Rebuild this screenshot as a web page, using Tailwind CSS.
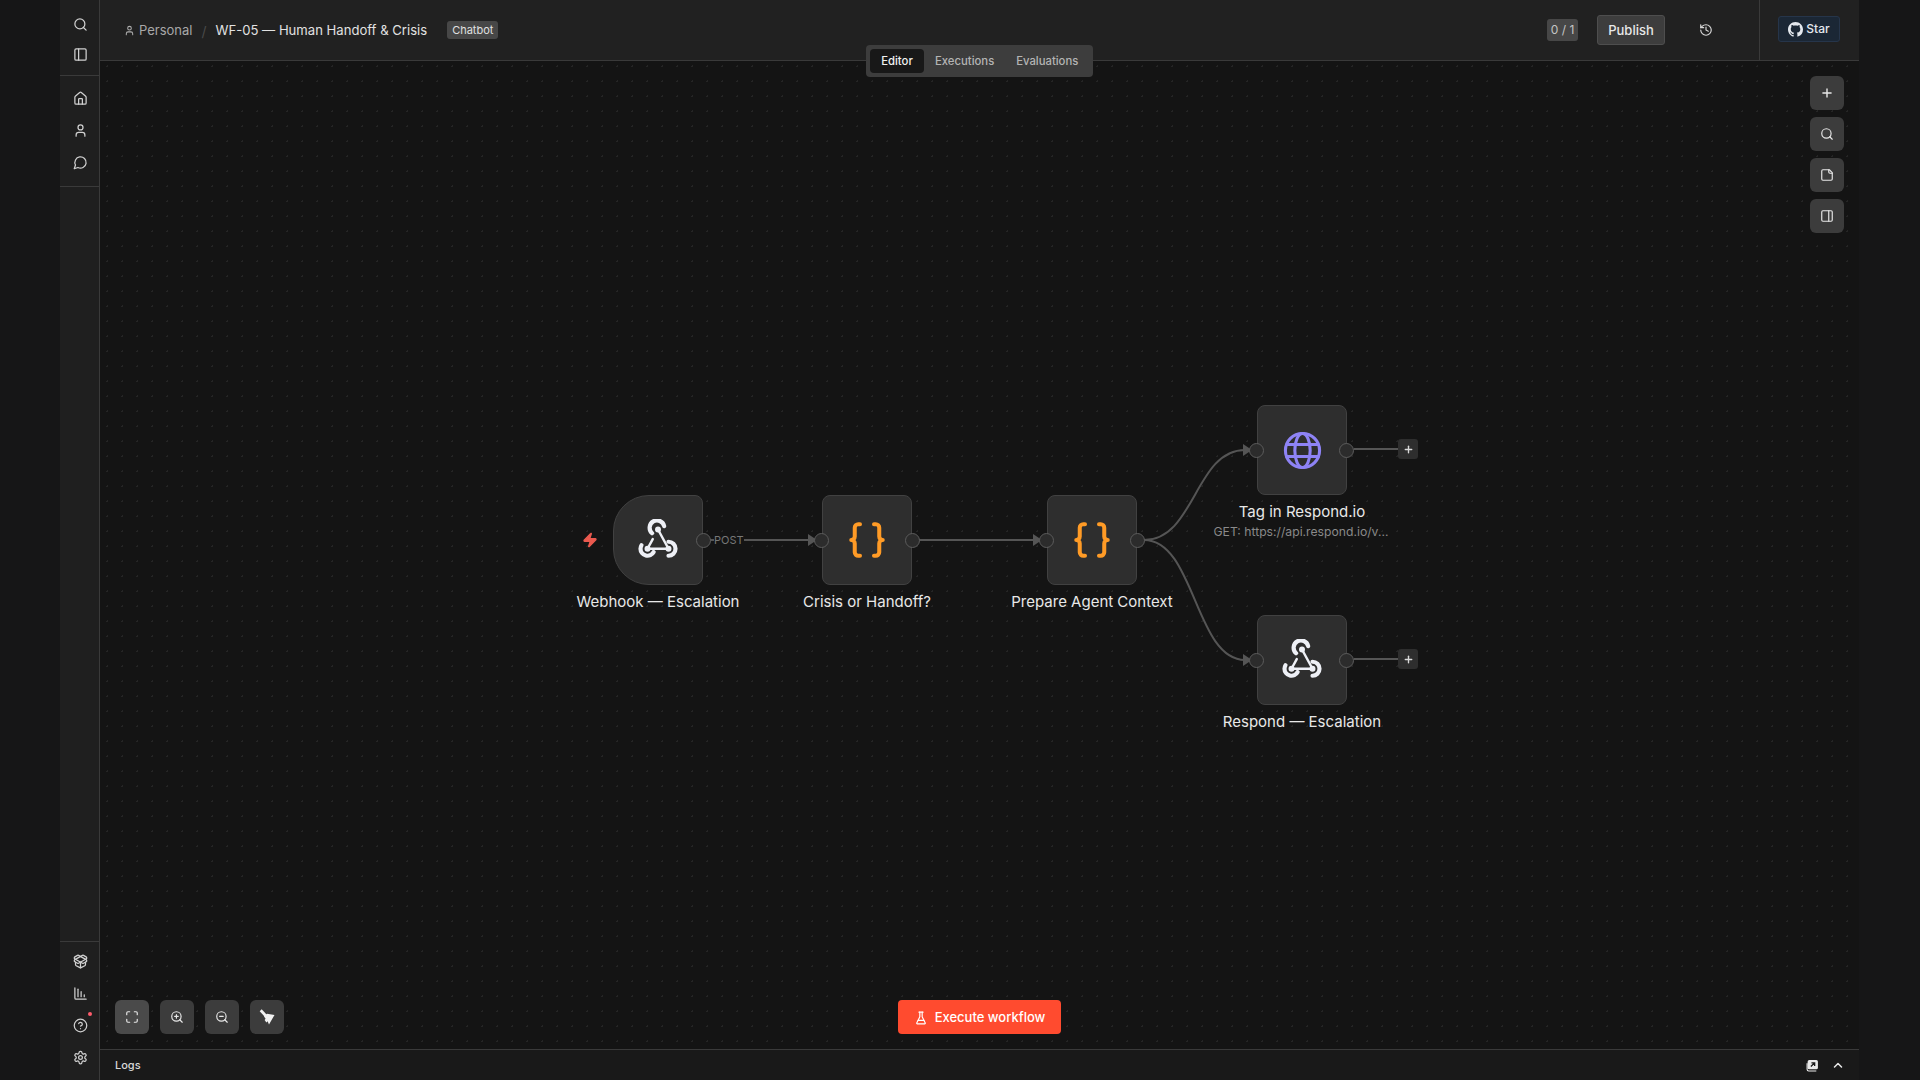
<!DOCTYPE html>
<html lang="en">
  <head>
    <meta charset="UTF-8" />
    <title>WF-05 — Human Handoff & Crisis</title>
    <script src="https://cdn.jsdelivr.net/npm/@tailwindcss/browser@4"></script>
  </head>
  <body class="bg-[#161617] font-[Inter,sans-serif] overflow-hidden">
    <div class="flex h-screen w-[1799px] ml-[60px]">
      <!-- sidebar -->
      <aside class="w-10 shrink-0 flex flex-col bg-[#1f1f1f] border-r border-[#3a3a3a] text-[#d0d0d0] pl-px">
        <div class="h-[76px] pt-[9px] border-b border-[#3a3a3a] -ml-px">
          <div class="h-[30px] pl-px flex items-center justify-center">
            <svg class="w-[15px] h-[15px]" viewBox="0 0 24 24" fill="none" stroke="currentColor" stroke-width="2" stroke-linecap="round" stroke-linejoin="round"><circle cx="11" cy="11" r="8"/><path d="m21 21-4.3-4.3"/></svg>
          </div>
          <div class="h-[30px] pl-px flex items-center justify-center">
            <svg class="w-[15px] h-[15px]" viewBox="0 0 24 24" fill="none" stroke="currentColor" stroke-width="2" stroke-linecap="round" stroke-linejoin="round"><rect x="3" y="3" width="18" height="18" rx="2"/><path d="M9 3v18"/></svg>
          </div>
        </div>
        <div class="h-[111px] pt-[6px] border-b border-[#3a3a3a] -ml-px">
          <div class="h-8 pl-px flex items-center justify-center">
            <svg class="w-[15px] h-[15px]" viewBox="0 0 24 24" fill="none" stroke="currentColor" stroke-width="2" stroke-linecap="round" stroke-linejoin="round"><path d="M15 21v-8a1 1 0 0 0-1-1h-4a1 1 0 0 0-1 1v8"/><path d="M3 10a2 2 0 0 1 .709-1.528l7-5.999a2 2 0 0 1 2.582 0l7 5.999A2 2 0 0 1 21 10v9a2 2 0 0 1-2 2H5a2 2 0 0 1-2-2z"/></svg>
          </div>
          <div class="h-8 pl-px flex items-center justify-center">
            <svg class="w-[15px] h-[15px]" viewBox="0 0 24 24" fill="none" stroke="currentColor" stroke-width="2" stroke-linecap="round" stroke-linejoin="round"><circle cx="12" cy="7" r="4"/><path d="M5 21v-2a4 4 0 0 1 4-4h6a4 4 0 0 1 4 4v2"/></svg>
          </div>
          <div class="h-8 pl-px flex items-center justify-center">
            <svg class="w-[15px] h-[15px]" viewBox="0 0 24 24" fill="none" stroke="currentColor" stroke-width="2" stroke-linecap="round" stroke-linejoin="round"><path d="M7.9 20A9 9 0 1 0 4 16.1L2 22Z"/></svg>
          </div>
        </div>
        <div class="mt-auto pt-[3px] h-[139px] border-t border-[#3a3a3a] -ml-px">
          <div class="h-8 pl-px flex items-center justify-center">
            <svg class="w-[15px] h-[15px]" viewBox="0 0 24 24" fill="none" stroke="currentColor" stroke-width="2" stroke-linecap="round" stroke-linejoin="round"><path d="M12 22v-9"/><path d="M15.17 2.21a1.67 1.67 0 0 1 1.63 0L21 4.57a1.93 1.93 0 0 1 0 3.36L8.82 14.79a1.655 1.655 0 0 1-1.64 0L3 12.43a1.93 1.93 0 0 1 0-3.36z"/><path d="M20 13v3.87a2.06 2.06 0 0 1-1.11 1.83l-6 3.08a1.93 1.93 0 0 1-1.78 0l-6-3.08A2.06 2.06 0 0 1 4 16.87V13"/><path d="M21 12.43a1.93 1.93 0 0 0 0-3.36L8.83 2.2a1.64 1.64 0 0 0-1.63 0L3 4.57a1.93 1.93 0 0 0 0 3.36l12.18 6.86a1.636 1.636 0 0 0 1.63 0z"/></svg>
          </div>
          <div class="h-8 pl-px flex items-center justify-center">
            <svg class="w-[15px] h-[15px]" viewBox="0 0 24 24" fill="none" stroke="currentColor" stroke-width="2" stroke-linecap="round" stroke-linejoin="round"><path d="M3 3v16a2 2 0 0 0 2 2h16"/><path d="M8 17V5"/><path d="M13 17V9"/><path d="M18 17v-3"/></svg>
          </div>
          <div class="relative h-8 pl-px flex items-center justify-center">
            <svg class="w-[15px] h-[15px]" viewBox="0 0 24 24" fill="none" stroke="currentColor" stroke-width="2" stroke-linecap="round" stroke-linejoin="round"><circle cx="12" cy="12" r="10"/><path d="M9.09 9a3 3 0 0 1 5.83 1c0 2-3 3-3 3"/><path d="M12 17h.01"/></svg>
            <span class="absolute left-[28px] top-[3px] w-1 h-1 rounded-full bg-[#ff5c6c]"></span>
          </div>
          <div class="h-8 pl-px flex items-center justify-center">
            <svg class="w-[15px] h-[15px]" viewBox="0 0 24 24" fill="none" stroke="currentColor" stroke-width="2" stroke-linecap="round" stroke-linejoin="round"><path d="M12.22 2h-.44a2 2 0 0 0-2 2v.18a2 2 0 0 1-1 1.73l-.43.25a2 2 0 0 1-2 0l-.15-.08a2 2 0 0 0-2.73.73l-.22.38a2 2 0 0 0 .73 2.73l.15.1a2 2 0 0 1 1 1.72v.51a2 2 0 0 1-1 1.74l-.15.09a2 2 0 0 0-.73 2.73l.22.38a2 2 0 0 0 2.73.73l.15-.08a2 2 0 0 1 2 0l.43.25a2 2 0 0 1 1 1.73V20a2 2 0 0 0 2 2h.44a2 2 0 0 0 2-2v-.18a2 2 0 0 1 1-1.73l.43-.25a2 2 0 0 1 2 0l.15.08a2 2 0 0 0 2.73-.73l.22-.39a2 2 0 0 0-.73-2.73l-.15-.08a2 2 0 0 1-1-1.74v-.5a2 2 0 0 1 1-1.74l.15-.09a2 2 0 0 0 .73-2.73l-.22-.38a2 2 0 0 0-2.73-.73l-.15.08a2 2 0 0 1-2 0l-.43-.25a2 2 0 0 1-1-1.73V4a2 2 0 0 0-2-2z"/><circle cx="12" cy="12" r="3"/></svg>
          </div>
        </div>
      </aside>

      <main class="flex-1 flex flex-col min-w-0">
        <!-- header -->
        <header class="h-[61px] shrink-0 flex items-center bg-[#212121] border-b border-[#3a3a3a] pl-[25px]">
          <svg class="w-[11px] h-[11px] text-[#b0b0b0] mr-[3px] -translate-x-px" viewBox="0 0 24 24" fill="none" stroke="currentColor" stroke-width="2.2" stroke-linecap="round" stroke-linejoin="round"><circle cx="12" cy="7" r="4"/><path d="M5 21v-2a4 4 0 0 1 4-4h6a4 4 0 0 1 4 4v2"/></svg>
          <span class="mt-[2px] text-[13px] text-[#a8a8a8]">Personal</span>
          <span class="mt-[2px] text-[14px] text-[#4a4a4a] ml-[9px] mr-[9px]">/</span>
          <span class="mt-[2px] text-[13.1px] text-[#e2e2e2]">WF-05 — Human Handoff &amp; Crisis</span>
          <span class="ml-5 h-[18px] px-[5px] -mt-px pt-px flex items-center rounded-[3px] bg-[#474747] text-[11px] text-[#e0e0e0]">Chatbot</span>
          <span class="ml-auto h-[22px] w-[31px] flex items-center justify-center rounded-[3px] bg-[#474747] text-[12px] text-[#c4c4c4]">0 / 1</span>
          <button class="ml-[19px] h-[30px] w-[68px] pt-px rounded-[3px] bg-[#3d3d3d] border border-[#4e4e4e] text-[13px] font-medium text-[#e8e8e8]">Publish</button>
          <svg class="ml-[34px] w-[14px] h-[14px] text-[#d8d8d8]" viewBox="0 0 24 24" fill="none" stroke="currentColor" stroke-width="2" stroke-linecap="round" stroke-linejoin="round"><path d="M3 12a9 9 0 1 0 9-9 9.75 9.75 0 0 0-6.74 2.74L3 8"/><path d="M3 3v5h5"/><path d="M12 7v5l4 2"/></svg>
          <div class="ml-[46px] h-full w-[100px] flex items-center border-l border-[#3a3a3a] pl-[18px]">
            <div class="h-[26px] w-[62px] -mt-[2px] flex items-center justify-center gap-[3px] rounded-[3px] bg-[#1b2735] border border-[#26354a] text-[12px] font-medium text-[#e4e8ee]">
              <svg class="w-[15px] h-[15px]" viewBox="0 0 16 16" fill="currentColor"><path d="M8 0C3.58 0 0 3.58 0 8c0 3.54 2.29 6.53 5.47 7.59.4.07.55-.17.55-.38 0-.19-.01-.82-.01-1.49-2.01.37-2.53-.49-2.69-.94-.09-.23-.48-.94-.82-1.13-.28-.15-.68-.52-.01-.53.63-.01 1.08.58 1.23.82.72 1.21 1.87.87 2.33.66.07-.52.28-.87.51-1.07-1.78-.2-3.64-.89-3.64-3.95 0-.87.31-1.59.82-2.15-.08-.2-.36-1.02.08-2.12 0 0 .67-.21 2.2.82.64-.18 1.32-.27 2-.27.68 0 1.36.09 2 .27 1.53-1.04 2.2-.82 2.2-.82.44 1.1.16 1.92.08 2.12.51.56.82 1.27.82 2.15 0 3.07-1.87 3.75-3.65 3.95.29.25.54.73.54 1.48 0 1.07-.01 1.93-.01 2.2 0 .21.15.46.55.38A8.013 8.013 0 0016 8c0-4.42-3.58-8-8-8z"/></svg>
              Star
            </div>
          </div>
        </header>

        <!-- canvas -->
        <section class="relative flex-1 bg-[#141414] bg-[radial-gradient(#252525_1px,transparent_1px)] bg-[length:15px_15px] bg-[position:0_-2px]">
          <!-- tabs -->
          <div class="absolute left-[766px] -top-4 h-8 w-[227px] flex items-center rounded-[4px] bg-[#3d3d3d] pl-1 text-[11.3px] leading-6 font-medium text-[#b4b4b4]">
            <span class="w-[54px] h-6 flex items-center justify-center rounded-[4px] bg-[#181818] text-[#f0f0f0]">Editor</span>
            <span class="ml-[11px]">Executions</span>
            <span class="ml-[22px]">Evaluations</span>
          </div>

          <!-- edges -->
          <svg class="absolute inset-0 w-full h-full" fill="none" stroke="#555555" stroke-width="2">
            <path d="M643 479H710"/>
            <path d="M610 479H614" />
            <path d="M819 479H935"/>
            <path d="M1044 479C1095 479 1095 389 1145 389"/>
            <path d="M1044 479C1095 479 1095 599 1145 599"/>
            <path d="M1254 388H1298"/>
            <path d="M1254 598H1298"/>
            <path d="M708 473L717 479L708 485Z" fill="#555555" stroke="none"/>
            <path d="M933 473L942 479L933 485Z" fill="#555555" stroke="none"/>
            <path d="M1143 383L1152 389L1143 395Z" fill="#555555" stroke="none"/>
            <path d="M1143 593L1152 599L1143 605Z" fill="#555555" stroke="none"/>
          </svg>
          <span class="absolute left-[614px] top-[472px] text-[11px] leading-[14px] text-[#777777] bg-[#141414]">POST</span>

          <!-- trigger bolt -->
          <svg class="absolute left-[482px] top-[470px] w-[16px] h-[18px] text-[#ea5a4f]" viewBox="0 0 24 24" fill="currentColor" stroke="currentColor" stroke-width="2" stroke-linejoin="round"><path d="M4 14a1 1 0 0 1-.78-1.63l9.9-10.2a.5.5 0 0 1 .86.46l-1.92 6.02A1 1 0 0 0 13 10h7a1 1 0 0 1 .78 1.63l-9.9 10.2a.5.5 0 0 1-.86-.46l1.92-6.02A1 1 0 0 0 11 14z"/></svg>

          <!-- webhook node -->
          <div class="absolute left-[513px] top-[434px] w-[90px] h-[90px] flex items-center justify-center rounded-l-[36px] rounded-r-lg bg-[#2e2e2e] border border-[#414141]">
            <svg class="w-[42px] h-[42px] text-[#eef0f6]" viewBox="0 0 24 24" fill="none" stroke="currentColor" stroke-width="2.4" stroke-linecap="round" stroke-linejoin="round"><path d="M8.63 8.12a4.2 4.2 0 1 1 6.89-4.06"/><path d="M9.53 18.88A4 4 0 0 1 2 17c.01-.7.2-1.4.57-2"/><path d="M18 13a4 4 0 0 1 0 8"/><path d="M6 17 9 11.5M12 6l6 11H6" stroke-width="1.4"/><circle cx="6" cy="17" r="1.7" fill="currentColor" stroke="none"/><circle cx="12" cy="6" r="1.7" fill="currentColor" stroke="none"/><circle cx="18" cy="17" r="1.7" fill="currentColor" stroke="none"/></svg>
            <span class="absolute -right-[8.5px] top-[37px] w-[15px] h-[15px] rounded-full bg-[#2c2c2c] border border-[#5c5c5c]"></span>
          </div>
          <p class="absolute left-[458px] top-[532px] w-[200px] text-center text-[15px] leading-[18px] text-[#e8e8e8]">Webhook — Escalation</p>

          <!-- crisis node -->
          <div class="absolute left-[722px] top-[434px] w-[90px] h-[90px] flex items-center justify-center rounded-lg bg-[#2e2e2e] border border-[#414141]">
            <svg class="w-[42px] h-[42px] text-[#ff9b26]" viewBox="0 0 24 24" fill="none" stroke="currentColor" stroke-width="2.3" stroke-linecap="round" stroke-linejoin="round"><path d="M8 3H7a2 2 0 0 0-2 2v5a2 2 0 0 1-2 2 2 2 0 0 1 2 2v5c0 1.1.9 2 2 2h1"/><path d="M16 21h1a2 2 0 0 0 2-2v-5c0-1.1.9-2 2-2a2 2 0 0 1-2-2V5a2 2 0 0 0-2-2h-1"/></svg>
            <span class="absolute -left-[9px] top-[37px] w-[15px] h-[15px] rounded-full bg-[#2c2c2c] border border-[#5c5c5c]"></span>
            <span class="absolute -right-[8.5px] top-[37px] w-[15px] h-[15px] rounded-full bg-[#2c2c2c] border border-[#5c5c5c]"></span>
          </div>
          <p class="absolute left-[667px] top-[532px] w-[200px] text-center text-[15px] leading-[18px] text-[#e8e8e8]">Crisis or Handoff?</p>

          <!-- prepare node -->
          <div class="absolute left-[947px] top-[434px] w-[90px] h-[90px] flex items-center justify-center rounded-lg bg-[#2e2e2e] border border-[#414141]">
            <svg class="w-[42px] h-[42px] text-[#ff9b26]" viewBox="0 0 24 24" fill="none" stroke="currentColor" stroke-width="2.3" stroke-linecap="round" stroke-linejoin="round"><path d="M8 3H7a2 2 0 0 0-2 2v5a2 2 0 0 1-2 2 2 2 0 0 1 2 2v5c0 1.1.9 2 2 2h1"/><path d="M16 21h1a2 2 0 0 0 2-2v-5c0-1.1.9-2 2-2a2 2 0 0 1-2-2V5a2 2 0 0 0-2-2h-1"/></svg>
            <span class="absolute -left-[9px] top-[37px] w-[15px] h-[15px] rounded-full bg-[#2c2c2c] border border-[#5c5c5c]"></span>
            <span class="absolute -right-[8.5px] top-[37px] w-[15px] h-[15px] rounded-full bg-[#2c2c2c] border border-[#5c5c5c]"></span>
          </div>
          <p class="absolute left-[892px] top-[532px] w-[200px] text-center text-[15px] leading-[18px] text-[#e8e8e8]">Prepare Agent Context</p>

          <!-- tag node -->
          <div class="absolute left-[1157px] top-[344px] w-[90px] h-[90px] flex items-center justify-center rounded-lg bg-[#2e2e2e] border border-[#414141]">
            <svg class="w-[41px] h-[41px] text-[#8e83f5]" viewBox="0 0 24 24" fill="none" stroke="currentColor" stroke-width="1.8" stroke-linecap="round" stroke-linejoin="round"><circle cx="12" cy="12" r="10"/><ellipse cx="12" cy="12" rx="4.5" ry="10"/><path d="M2.8 8.5h18.4"/><path d="M2.8 15.5h18.4"/></svg>
            <span class="absolute -left-[9px] top-[37px] w-[15px] h-[15px] rounded-full bg-[#2c2c2c] border border-[#5c5c5c]"></span>
            <span class="absolute -right-[8px] top-[37px] w-[15px] h-[15px] rounded-full bg-[#2c2c2c] border border-[#5c5c5c]"></span>
          </div>
          <p class="absolute left-[1102px] top-[442px] w-[200px] text-center text-[15px] leading-[18px] text-[#e8e8e8]">Tag in Respond.io</p>
          <p class="absolute left-[1101px] top-[463px] w-[200px] text-center text-[12.2px] leading-4 text-[#8a8a8a]">GET: https://api.respond.io/v...</p>
          <span class="absolute left-[1298px] top-[378px] w-5 h-5 flex items-center justify-center rounded-[3px] bg-[#2e2e2e] text-[#d8d8d8]">
            <svg class="w-[11px] h-[11px]" viewBox="0 0 24 24" fill="none" stroke="currentColor" stroke-width="3" stroke-linecap="round"><path d="M5 12h14"/><path d="M12 5v14"/></svg>
          </span>

          <!-- respond node -->
          <div class="absolute left-[1157px] top-[554px] w-[90px] h-[90px] flex items-center justify-center rounded-lg bg-[#2e2e2e] border border-[#414141]">
            <svg class="w-[42px] h-[42px] text-[#eef0f6]" viewBox="0 0 24 24" fill="none" stroke="currentColor" stroke-width="2.4" stroke-linecap="round" stroke-linejoin="round"><path d="M8.63 8.12a4.2 4.2 0 1 1 6.89-4.06"/><path d="M9.53 18.88A4 4 0 0 1 2 17c.01-.7.2-1.4.57-2"/><path d="M18 13a4 4 0 0 1 0 8"/><path d="M6 17 9 11.5M12 6l6 11H6" stroke-width="1.4"/><circle cx="6" cy="17" r="1.7" fill="currentColor" stroke="none"/><circle cx="12" cy="6" r="1.7" fill="currentColor" stroke="none"/><circle cx="18" cy="17" r="1.7" fill="currentColor" stroke="none"/></svg>
            <span class="absolute -left-[9px] top-[37px] w-[15px] h-[15px] rounded-full bg-[#2c2c2c] border border-[#5c5c5c]"></span>
            <span class="absolute -right-[8px] top-[37px] w-[15px] h-[15px] rounded-full bg-[#2c2c2c] border border-[#5c5c5c]"></span>
          </div>
          <p class="absolute left-[1102px] top-[652px] w-[200px] text-center text-[15px] leading-[18px] text-[#e8e8e8]">Respond — Escalation</p>
          <span class="absolute left-[1298px] top-[588px] w-5 h-5 flex items-center justify-center rounded-[3px] bg-[#2e2e2e] text-[#d8d8d8]">
            <svg class="w-[11px] h-[11px]" viewBox="0 0 24 24" fill="none" stroke="currentColor" stroke-width="3" stroke-linecap="round"><path d="M5 12h14"/><path d="M12 5v14"/></svg>
          </span>

          <!-- right tools -->
          <div class="absolute right-[15px] top-[15px] flex flex-col gap-[7px] text-[#e8e8e8]">
            <button class="w-[34px] h-[34px] flex items-center justify-center rounded-md bg-[#3c3c3c]">
              <svg class="w-[14px] h-[14px]" viewBox="0 0 24 24" fill="none" stroke="currentColor" stroke-width="2.4" stroke-linecap="round"><path d="M5 12h14"/><path d="M12 5v14"/></svg>
            </button>
            <button class="w-[34px] h-[34px] flex items-center justify-center rounded-md bg-[#3c3c3c]">
              <svg class="w-[14px] h-[14px]" viewBox="0 0 24 24" fill="none" stroke="currentColor" stroke-width="2" stroke-linecap="round"><circle cx="11" cy="11" r="8"/><path d="m21 21-4.3-4.3"/></svg>
            </button>
            <button class="w-[34px] h-[34px] flex items-center justify-center rounded-md bg-[#3c3c3c]">
              <svg class="w-[14px] h-[14px]" viewBox="0 0 24 24" fill="none" stroke="currentColor" stroke-width="2" stroke-linecap="round" stroke-linejoin="round"><path d="M16 3H5a2 2 0 0 0-2 2v14a2 2 0 0 0 2 2h14a2 2 0 0 0 2-2V8Z"/><path d="M15 3v4a2 2 0 0 0 2 2h4"/></svg>
            </button>
            <button class="w-[34px] h-[34px] flex items-center justify-center rounded-md bg-[#3c3c3c]">
              <svg class="w-[14px] h-[14px]" viewBox="0 0 24 24" fill="none" stroke="currentColor" stroke-width="2" stroke-linecap="round" stroke-linejoin="round"><rect x="3" y="3" width="18" height="18" rx="2"/><path d="M15 3v18"/></svg>
            </button>
          </div>

          <!-- bottom tools -->
          <div class="absolute left-[15px] bottom-[15px] flex gap-[11px] text-[#e8e8e8]">
            <button class="w-[34px] h-[34px] flex items-center justify-center rounded-md bg-[#4a4a4a]">
              <svg class="w-[14px] h-[14px]" viewBox="0 0 24 24" fill="none" stroke="currentColor" stroke-width="2" stroke-linecap="round" stroke-linejoin="round"><path d="M8 3H5a2 2 0 0 0-2 2v3"/><path d="M21 8V5a2 2 0 0 0-2-2h-3"/><path d="M3 16v3a2 2 0 0 0 2 2h3"/><path d="M16 21h3a2 2 0 0 0 2-2v-3"/></svg>
            </button>
            <button class="w-[34px] h-[34px] flex items-center justify-center rounded-md bg-[#3c3c3c]">
              <svg class="w-[14px] h-[14px]" viewBox="0 0 24 24" fill="none" stroke="currentColor" stroke-width="2" stroke-linecap="round"><circle cx="11" cy="11" r="8"/><path d="m21 21-4.3-4.3"/><path d="M11 8v6"/><path d="M8 11h6"/></svg>
            </button>
            <button class="w-[34px] h-[34px] flex items-center justify-center rounded-md bg-[#3c3c3c]">
              <svg class="w-[14px] h-[14px]" viewBox="0 0 24 24" fill="none" stroke="currentColor" stroke-width="2" stroke-linecap="round"><circle cx="11" cy="11" r="8"/><path d="m21 21-4.3-4.3"/><path d="M8 11h6"/></svg>
            </button>
            <button class="w-[34px] h-[34px] flex items-center justify-center rounded-md bg-[#3c3c3c]">
              <svg class="w-4 h-4 text-[#f2f2f2]" viewBox="0 0 16 16" fill="currentColor"><path d="M.7 2.3 2.7.3 8 6 6 8z"/><path d="M5 7.5 8 4.7 15.5 6 10 15.5 8.6 12.2 7.4 13.6 5.6 11 6.6 9.8z"/></svg>
            </button>
          </div>

          <!-- execute -->
          <button class="absolute left-[798px] bottom-[15px] w-[163px] h-[34px] pt-px flex items-center justify-center gap-[7px] rounded-[4px] bg-[#ff4b2f] text-[13px] font-medium text-white">
            <svg class="w-[14px] h-[14px]" viewBox="0 0 24 24" fill="none" stroke="currentColor" stroke-width="2" stroke-linecap="round" stroke-linejoin="round"><path d="M10 2v7.527a2 2 0 0 1-.211.896L4.72 20.55a1 1 0 0 0 .9 1.45h12.76a1 1 0 0 0 .9-1.45l-5.069-10.127A2 2 0 0 1 14 9.527V2"/><path d="M8.5 2h7"/><path d="M7 16h10"/></svg>
            Execute workflow
          </button>
        </section>

        <!-- logs -->
        <footer class="h-[31px] shrink-0 flex items-center bg-[#191919] border-t border-[#3a3a3a] pl-[15px] pr-[15px] text-[#d8d8d8]">
          <span class="text-[11px] font-medium">Logs</span>
          <svg class="ml-auto w-[13px] h-[13px] text-[#e8e8e8]" viewBox="0 0 24 24" fill="none"><rect x="3" y="2" width="19" height="17" rx="3" fill="currentColor"/><path d="M9 14l7-7M10 7h6v6" stroke="#191919" stroke-width="2.4"/><path d="M2 8v11a3 3 0 0 0 3 3h14" stroke="currentColor" stroke-width="2"/></svg>
          <svg class="ml-[13px] w-[12px] h-[12px] text-[#e8e8e8]" viewBox="0 0 24 24" fill="none" stroke="currentColor" stroke-width="3" stroke-linecap="round" stroke-linejoin="round"><path d="m5 16 7-7 7 7"/></svg>
        </footer>
      </main>
    </div>
  </body>
</html>
